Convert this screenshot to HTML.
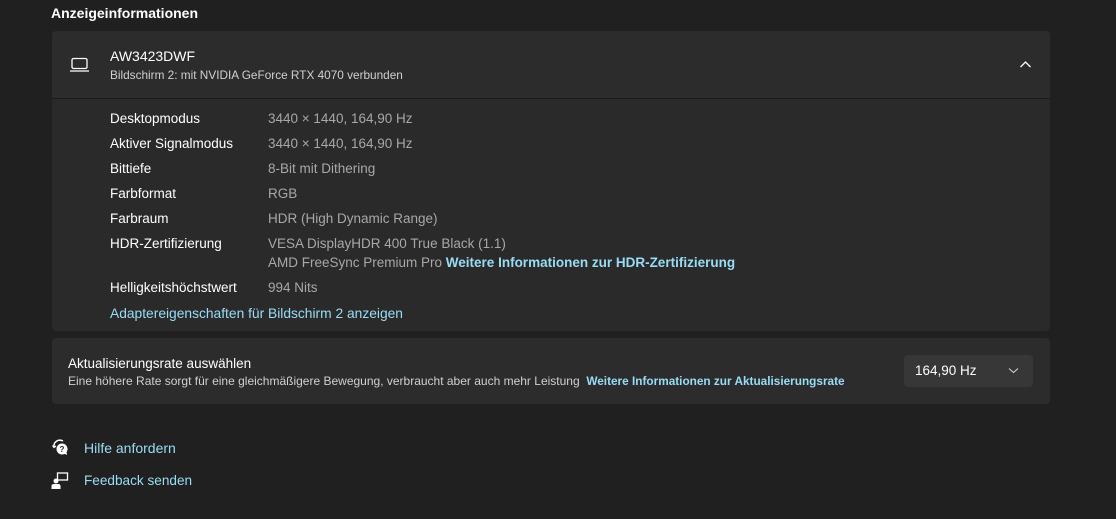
<!DOCTYPE html><html><head><style>
body{margin:0;width:1116px;height:519px;background:#202020;font-family:"Liberation Sans",sans-serif;color:#fff;position:relative;overflow:hidden}
.a{position:absolute;white-space:nowrap}
.l{font-size:13.5px;color:#fff}
.v{font-size:13.5px;color:#a8a8a8}
.k{color:#99dcf5}
</style></head><body>
<div class="a" style="left:51px;top:5px;font-size:14px;font-weight:bold">Anzeigeinformationen</div>
<div class="a" style="left:52px;top:31px;width:998px;height:67px;background:#2c2c2c;border-radius:4px 4px 0 0;border-bottom:1px solid #1c1c1c"></div>
<div class="a" style="left:52px;top:99px;width:998px;height:232px;background:#2a2a2a;border-radius:0 0 4px 4px"></div>
<svg class="a" style="left:69px;top:57px" width="22" height="16" viewBox="0 0 22 16"><rect x="3" y="1.5" width="15" height="10" rx="1.5" fill="none" stroke="#fff" stroke-width="1.3"/><line x1="1" y1="14" x2="20" y2="14" stroke="#fff" stroke-width="1.3"/></svg>
<div class="a" style="left:110px;top:48px;font-size:14px">AW3423DWF</div>
<div class="a" style="left:110px;top:68px;font-size:11.8px;color:#d0d0d0">Bildschirm 2: mit NVIDIA GeForce RTX 4070 verbunden</div>
<svg class="a" style="left:1019px;top:60px" width="13" height="9" viewBox="0 0 13 9"><path d="M1.5 7L6.5 2L11.5 7" fill="none" stroke="#fff" stroke-width="1.3"/></svg>
<div class="a l" style="left:110px;top:111px">Desktopmodus</div><div class="a v" style="left:268px;top:111px">3440 × 1440, 164,90 Hz</div>
<div class="a l" style="left:110px;top:136px">Aktiver Signalmodus</div><div class="a v" style="left:268px;top:136px">3440 × 1440, 164,90 Hz</div>
<div class="a l" style="left:110px;top:161px">Bittiefe</div><div class="a v" style="left:268px;top:161px">8-Bit mit Dithering</div>
<div class="a l" style="left:110px;top:186px">Farbformat</div><div class="a v" style="left:268px;top:186px">RGB</div>
<div class="a l" style="left:110px;top:211px">Farbraum</div><div class="a v" style="left:268px;top:211px">HDR (High Dynamic Range)</div>
<div class="a l" style="left:110px;top:236px">HDR-Zertifizierung</div><div class="a v" style="left:268px;top:236px">VESA DisplayHDR 400 True Black (1.1)</div>
<div class="a v" style="left:268px;top:255px">AMD FreeSync Premium Pro <b class="k">Weitere Informationen zur HDR-Zertifizierung</b></div>
<div class="a l" style="left:110px;top:280px">Helligkeitshöchstwert</div><div class="a v" style="left:268px;top:280px">994 Nits</div>
<div class="a l k" style="left:110px;top:306px;font-size:13.8px">Adaptereigenschaften für Bildschirm 2 anzeigen</div>
<div class="a" style="left:52px;top:338px;width:998px;height:66px;background:#2c2c2c;border-radius:4px"></div>
<div class="a" style="left:68px;top:356px;font-size:13.5px">Aktualisierungsrate auswählen</div>
<div class="a" style="left:68px;top:374px;font-size:12px;color:#d0d0d0">Eine höhere Rate sorgt für eine gleichmäßigere Bewegung, verbraucht aber auch mehr Leistung &nbsp;<b class="k" style="font-size:11.8px">Weitere Informationen zur Aktualisierungsrate</b></div>
<div class="a" style="left:904px;top:355px;width:129px;height:32px;background:#373737;border-radius:4px"></div>
<div class="a" style="left:915px;top:363px;font-size:13.5px">164,90 Hz</div>
<svg class="a" style="left:1008px;top:367px" width="11" height="7" viewBox="0 0 11 7"><path d="M1 1.5L5.5 5.5L10 1.5" fill="none" stroke="#ccc" stroke-width="1.1"/></svg>
<svg class="a" style="left:51px;top:438px" width="20" height="20" viewBox="0 0 20 20"><path d="M3 9A6 6 0 0 1 12 3" fill="none" stroke="#fff" stroke-width="1.5"/><path d="M1.5 7.5L3 9.5L5 8" fill="none" stroke="#fff" stroke-width="1.3"/><circle cx="11" cy="11" r="5.5" fill="#fff"/><path d="M13 15.5L16 17L15.5 14Z" fill="#fff"/><text x="11" y="14" font-size="8" font-weight="bold" text-anchor="middle" fill="#202020" font-family="Liberation Sans">?</text></svg>
<div class="a k" style="left:84px;top:440px;font-size:14px">Hilfe anfordern</div>
<svg class="a" style="left:51px;top:472px" width="18" height="18" viewBox="0 0 18 18"><rect x="6.5" y="1" width="10" height="7" fill="none" stroke="#fff" stroke-width="1.3"/><circle cx="5" cy="9" r="2.5" fill="#fff"/><path d="M0.5 17V14Q0.5 12 3 12H7Q9.5 12 9.5 14V17Z" fill="#fff"/></svg>
<div class="a k" style="left:84px;top:473px;font-size:13.6px">Feedback senden</div>
</body></html>
